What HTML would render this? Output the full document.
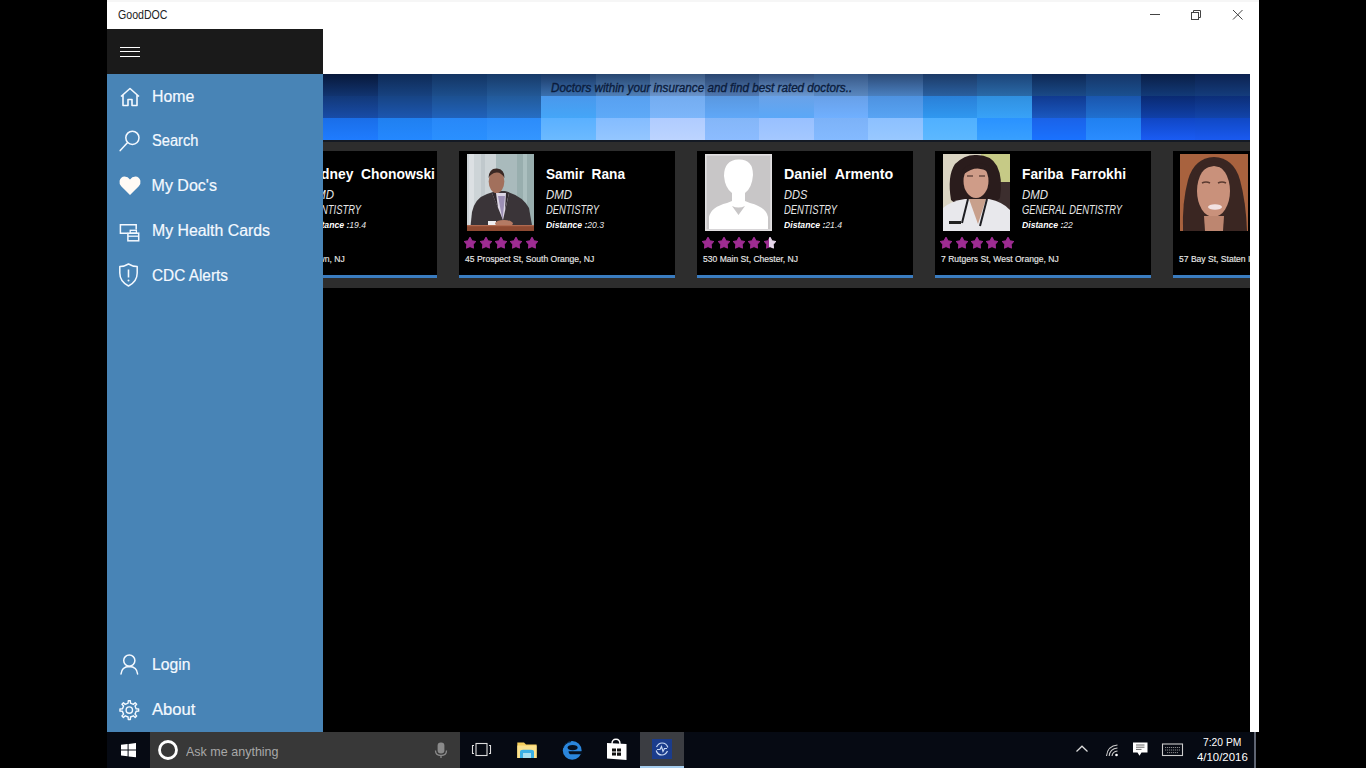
<!DOCTYPE html>
<html><head><meta charset="utf-8">
<style>
*{margin:0;padding:0;box-sizing:border-box}
html,body{width:1366px;height:768px;overflow:hidden;background:#000;font-family:"Liberation Sans",sans-serif}
.abs{position:absolute}
#win{position:absolute;left:107px;top:0;width:1152px;height:732px;background:#000}
#titlebar{position:absolute;left:107px;top:0;width:1152px;height:29px;background:#fff}
#titlebar .tl{position:absolute;left:0;top:0;width:1152px;height:2px;background:#f6f6f6}
#apptitle{transform-origin:0 0;transform:scaleX(0.884);position:absolute;left:118px;top:8.6px;font-size:12px;line-height:12px;color:#222;white-space:nowrap}
#cmdbar{position:absolute;left:323px;top:29px;width:936px;height:45px;background:#fff}
#rframe{position:absolute;left:1250px;top:29px;width:9px;height:703px;background:#fff}
#banner{position:absolute;left:323px;top:74px;width:927px;height:66px;overflow:hidden}
.tile{position:absolute}
#bannertext{-webkit-text-stroke:0.35px #0b1c3c;transform-origin:0 0;transform:scaleX(0.973);position:absolute;left:551px;top:81.9px;font-size:12px;line-height:12px;font-style:italic;color:#0b1c3c;white-space:nowrap}
#strip{position:absolute;left:323px;top:140px;width:927px;height:148px;background:#2d2d2d;overflow:hidden}
#strip .topl{position:absolute;left:0;top:0;width:927px;height:1.5px;background:#141a24}
#cardsclip{position:absolute;left:0;top:0;width:1250px;height:288px;overflow:hidden}
.card{position:absolute;top:151px;width:216px;height:126px;background:#000;color:#fff}
.card .photo{position:absolute;left:8px;top:3px;width:67px;height:77px}
.card .photo svg{display:block}
.card .name{transform-origin:0 0;position:absolute;left:86.5px;top:15.3px;font-size:15px;line-height:15px;font-weight:bold;white-space:nowrap;color:#fff}
.card .deg{transform-origin:0 0;position:absolute;left:86.5px;top:38.4px;font-size:12px;line-height:12px;font-style:italic;white-space:nowrap;color:#e6e6e6}
.card .spec{transform-origin:0 0;position:absolute;left:86.5px;top:52.5px;font-size:12px;line-height:12px;font-style:italic;white-space:nowrap;color:#e6e6e6}
.card .dist{transform-origin:0 0;transform:scaleX(0.96);position:absolute;left:86.5px;top:70.1px;font-size:9px;line-height:9px;font-style:italic;white-space:nowrap;color:#e6e6e6}
.card .dist b{color:#fff}
.card .stars{position:absolute;left:5.4px;top:86px;height:11px;width:90px}
.star{position:absolute;top:0}
.star svg{display:block}
.card .addr{-webkit-text-stroke:0.15px #e8e8e8;transform-origin:0 0;transform:scaleX(0.9);position:absolute;left:5.6px;top:102.5px;font-size:9.5px;line-height:9.5px;white-space:nowrap;color:#e8e8e8}
.card .bline{position:absolute;left:0;top:123.5px;width:216px;height:3.3px;background:#3a7cc0}
#pane{position:absolute;left:107px;top:29px;width:216px;height:703px;background:#4884b6}
#panehead{position:absolute;left:107px;top:29px;width:216px;height:45px;background:#1a1a1a}
.hb{position:absolute;left:120px;width:20px;height:1.4px;background:#fff}
.nav{-webkit-text-stroke:0.2px #f4f9ff;transform-origin:0 0;position:absolute;left:151.6px;font-size:16px;line-height:16px;color:#f4f9ff;white-space:nowrap}
.ico{position:absolute}
#taskbar{position:absolute;left:107px;top:732px;width:1149px;height:36px;background:#060a13}
#search{position:absolute;left:150px;top:732px;width:310px;height:36px;background:#383838}
#ask{transform-origin:0 0;transform:scaleX(0.963);position:absolute;left:186px;top:744.6px;font-size:13px;line-height:13px;color:#a8a8a8;white-space:nowrap}
#active{position:absolute;left:640px;top:732px;width:44px;height:36px;background:#3b3d42}
#activebar{position:absolute;left:640px;top:766px;width:44px;height:2px;background:#a6cdee}
.clock{transform-origin:0 0;position:absolute;font-size:11px;line-height:11px;color:#fff;white-space:nowrap}
#showdesk{position:absolute;left:1254px;top:732px;width:2px;height:36px;background:#5e6472}
</style></head><body>
<div id="win"></div>
<div id="titlebar"><div class="tl"></div></div>
<div id="apptitle">GoodDOC</div>
<!-- window controls -->
<svg class="abs" style="left:1140px;top:4px" width="110" height="22" viewBox="0 0 110 22">
 <line x1="10" y1="10.5" x2="20" y2="10.5" stroke="#444" stroke-width="1"/>
 <rect x="51.5" y="8.5" width="7" height="7" fill="none" stroke="#444" stroke-width="1"/>
 <path d="M53.5 8.5 V6.5 H60.5 V13.5 H58.5" fill="none" stroke="#444" stroke-width="1"/>
 <path d="M93 6 L102.5 15.5 M102.5 6 L93 15.5" stroke="#444" stroke-width="1"/>
</svg>
<div id="cmdbar"></div>
<div id="rframe"></div>
<div id="banner"></div>
<div class="tile" style="left:323.00px;top:74px;width:55.03px;height:22px;background:linear-gradient(#08183a,#113470)"></div>
<div class="tile" style="left:323.00px;top:96px;width:55.03px;height:22px;background:linear-gradient(#123878,#184ca8)"></div>
<div class="tile" style="left:323.00px;top:118px;width:55.03px;height:22px;background:linear-gradient(#1a6ee8,#1f7cff)"></div>
<div class="tile" style="left:377.53px;top:74px;width:55.03px;height:22px;background:linear-gradient(#0e2a56,#174280)"></div>
<div class="tile" style="left:377.53px;top:96px;width:55.03px;height:22px;background:linear-gradient(#174484,#1c56b0)"></div>
<div class="tile" style="left:377.53px;top:118px;width:55.03px;height:22px;background:linear-gradient(#2080f0,#2488ff)"></div>
<div class="tile" style="left:432.06px;top:74px;width:55.03px;height:22px;background:linear-gradient(#133462,#1c4e8c)"></div>
<div class="tile" style="left:432.06px;top:96px;width:55.03px;height:22px;background:linear-gradient(#1c5090,#2062bc)"></div>
<div class="tile" style="left:432.06px;top:118px;width:55.03px;height:22px;background:linear-gradient(#2888f8,#2a90ff)"></div>
<div class="tile" style="left:486.59px;top:74px;width:55.03px;height:22px;background:linear-gradient(#173a68,#225896)"></div>
<div class="tile" style="left:486.59px;top:96px;width:55.03px;height:22px;background:linear-gradient(#225a9a,#266ec4)"></div>
<div class="tile" style="left:486.59px;top:118px;width:55.03px;height:22px;background:linear-gradient(#2c8cfa,#3496ff)"></div>
<div class="tile" style="left:541.12px;top:74px;width:55.03px;height:22px;background:linear-gradient(#1c3a66,#3a70b0)"></div>
<div class="tile" style="left:541.12px;top:96px;width:55.03px;height:22px;background:linear-gradient(#4a98ec,#44a6f8)"></div>
<div class="tile" style="left:541.12px;top:118px;width:55.03px;height:22px;background:linear-gradient(#5ab0ff,#6cbaff)"></div>
<div class="tile" style="left:595.65px;top:74px;width:55.03px;height:22px;background:linear-gradient(#274670,#5080b8)"></div>
<div class="tile" style="left:595.65px;top:96px;width:55.03px;height:22px;background:linear-gradient(#58a0f0,#5eaaf8)"></div>
<div class="tile" style="left:595.65px;top:118px;width:55.03px;height:22px;background:linear-gradient(#84bcff,#94c6ff)"></div>
<div class="tile" style="left:650.18px;top:74px;width:55.03px;height:22px;background:linear-gradient(#3c5a82,#6a94cc)"></div>
<div class="tile" style="left:650.18px;top:96px;width:55.03px;height:22px;background:linear-gradient(#74acf0,#7cb6fa)"></div>
<div class="tile" style="left:650.18px;top:118px;width:55.03px;height:22px;background:linear-gradient(#b0ccff,#bcd4ff)"></div>
<div class="tile" style="left:704.71px;top:74px;width:55.03px;height:22px;background:linear-gradient(#2a4670,#5078b0)"></div>
<div class="tile" style="left:704.71px;top:96px;width:55.03px;height:22px;background:linear-gradient(#5a98e0,#60a8f8)"></div>
<div class="tile" style="left:704.71px;top:118px;width:55.03px;height:22px;background:linear-gradient(#84b6f8,#8cbcff)"></div>
<div class="tile" style="left:759.24px;top:74px;width:55.03px;height:22px;background:linear-gradient(#334f7c,#6a98d0)"></div>
<div class="tile" style="left:759.24px;top:96px;width:55.03px;height:22px;background:linear-gradient(#6aa2e8,#5aa8f8)"></div>
<div class="tile" style="left:759.24px;top:118px;width:55.03px;height:22px;background:linear-gradient(#98c0ff,#a4c8ff)"></div>
<div class="tile" style="left:813.76px;top:74px;width:55.03px;height:22px;background:linear-gradient(#385886,#5a88c0)"></div>
<div class="tile" style="left:813.76px;top:96px;width:55.03px;height:22px;background:linear-gradient(#68a0e8,#70b0ff)"></div>
<div class="tile" style="left:813.76px;top:118px;width:55.03px;height:22px;background:linear-gradient(#7cb2f8,#84baff)"></div>
<div class="tile" style="left:868.29px;top:74px;width:55.03px;height:22px;background:linear-gradient(#2c4a76,#4a80c0)"></div>
<div class="tile" style="left:868.29px;top:96px;width:55.03px;height:22px;background:linear-gradient(#4e92e0,#58a4f4)"></div>
<div class="tile" style="left:868.29px;top:118px;width:55.03px;height:22px;background:linear-gradient(#8cc0ff,#98c8ff)"></div>
<div class="tile" style="left:922.82px;top:74px;width:55.03px;height:22px;background:linear-gradient(#1c3a66,#2a60a0)"></div>
<div class="tile" style="left:922.82px;top:96px;width:55.03px;height:22px;background:linear-gradient(#2a80d8,#3098f0)"></div>
<div class="tile" style="left:922.82px;top:118px;width:55.03px;height:22px;background:linear-gradient(#50b0ff,#5cb8ff)"></div>
<div class="tile" style="left:977.35px;top:74px;width:55.03px;height:22px;background:linear-gradient(#1c4478,#2a6aa8)"></div>
<div class="tile" style="left:977.35px;top:96px;width:55.03px;height:22px;background:linear-gradient(#3090e0,#38a2f8)"></div>
<div class="tile" style="left:977.35px;top:118px;width:55.03px;height:22px;background:linear-gradient(#2a92ff,#38a0ff)"></div>
<div class="tile" style="left:1031.88px;top:74px;width:55.03px;height:22px;background:linear-gradient(#0e2854,#1a4a88)"></div>
<div class="tile" style="left:1031.88px;top:96px;width:55.03px;height:22px;background:linear-gradient(#103a90,#1a58c0)"></div>
<div class="tile" style="left:1031.88px;top:118px;width:55.03px;height:22px;background:linear-gradient(#1a62e8,#1a72ff)"></div>
<div class="tile" style="left:1086.41px;top:74px;width:55.03px;height:22px;background:linear-gradient(#163668,#1a5090)"></div>
<div class="tile" style="left:1086.41px;top:96px;width:55.03px;height:22px;background:linear-gradient(#1a56ae,#2070d0)"></div>
<div class="tile" style="left:1086.41px;top:118px;width:55.03px;height:22px;background:linear-gradient(#2080f0,#2a8cff)"></div>
<div class="tile" style="left:1140.94px;top:74px;width:55.03px;height:22px;background:linear-gradient(#0a1e46,#123a78)"></div>
<div class="tile" style="left:1140.94px;top:96px;width:55.03px;height:22px;background:linear-gradient(#0a2a72,#1040a8)"></div>
<div class="tile" style="left:1140.94px;top:118px;width:55.03px;height:22px;background:linear-gradient(#1046c4,#1a5cf4)"></div>
<div class="tile" style="left:1195.47px;top:74px;width:55.03px;height:22px;background:linear-gradient(#0c2250,#143c7c)"></div>
<div class="tile" style="left:1195.47px;top:96px;width:55.03px;height:22px;background:linear-gradient(#0c2e78,#1244aa)"></div>
<div class="tile" style="left:1195.47px;top:118px;width:55.03px;height:22px;background:linear-gradient(#1048c4,#1a5af0)"></div>
<div id="bannertext">Doctors within your insurance and find best rated doctors..</div>
<div id="strip"><div class="topl"></div></div>
<div id="cardsclip">
<div class="card" style="left:221px">
<div class="photo" style="left:8px"></div>
<div class="name" style="transform:scaleX(0.923)">Sidney&nbsp;&nbsp;Chonowski</div>
<div class="deg" style="transform:scaleX(0.952)">DMD</div>
<div class="spec" style="transform:scaleX(0.784)">DENTISTRY</div>
<div class="dist"><b>Distance :</b>19.4</div>
<div class="stars"><div class="star" style="left:0.0px"><svg width="12" height="12" viewBox="0 0 12 12"><path d="M6.00 0.40 L7.91 3.67 L11.61 4.48 L9.09 7.30 L9.47 11.07 L6.00 9.55 L2.53 11.07 L2.91 7.30 L0.39 4.48 L4.09 3.67 Z" fill="#9e2c92" stroke="#9e2c92" stroke-width="1.1" stroke-linejoin="round"/></svg></div><div class="star" style="left:15.3px"><svg width="12" height="12" viewBox="0 0 12 12"><path d="M6.00 0.40 L7.91 3.67 L11.61 4.48 L9.09 7.30 L9.47 11.07 L6.00 9.55 L2.53 11.07 L2.91 7.30 L0.39 4.48 L4.09 3.67 Z" fill="#9e2c92" stroke="#9e2c92" stroke-width="1.1" stroke-linejoin="round"/></svg></div><div class="star" style="left:30.6px"><svg width="12" height="12" viewBox="0 0 12 12"><path d="M6.00 0.40 L7.91 3.67 L11.61 4.48 L9.09 7.30 L9.47 11.07 L6.00 9.55 L2.53 11.07 L2.91 7.30 L0.39 4.48 L4.09 3.67 Z" fill="#9e2c92" stroke="#9e2c92" stroke-width="1.1" stroke-linejoin="round"/></svg></div><div class="star" style="left:45.9px"><svg width="12" height="12" viewBox="0 0 12 12"><path d="M6.00 0.40 L7.91 3.67 L11.61 4.48 L9.09 7.30 L9.47 11.07 L6.00 9.55 L2.53 11.07 L2.91 7.30 L0.39 4.48 L4.09 3.67 Z" fill="#9e2c92" stroke="#9e2c92" stroke-width="1.1" stroke-linejoin="round"/></svg></div><div class="star" style="left:61.2px"><svg width="12" height="12" viewBox="0 0 12 12"><path d="M6.00 0.40 L7.91 3.67 L11.61 4.48 L9.09 7.30 L9.47 11.07 L6.00 9.55 L2.53 11.07 L2.91 7.30 L0.39 4.48 L4.09 3.67 Z" fill="#9e2c92" stroke="#9e2c92" stroke-width="1.1" stroke-linejoin="round"/></svg></div></div>
<div class="addr">Speedwell Ave, Morristown, NJ</div>
<div class="bline"></div>
</div>
<div class="card" style="left:459px">
<div class="photo" style="left:8px"><svg width="67" height="77" viewBox="0 0 67 77">
<rect width="67" height="77" fill="#a9babc"/>
<rect x="0" y="0" width="29" height="77" fill="#cdd4d7"/>
<rect x="2" y="0" width="5" height="77" fill="#e2e6e8" opacity="0.7"/>
<rect x="14" y="0" width="4" height="77" fill="#b8c0c4" opacity="0.6"/>
<rect x="50" y="0" width="17" height="77" fill="#98aeae"/>
<rect x="56" y="0" width="4" height="77" fill="#b4c6c6" opacity="0.7"/>
<path d="M3 77 L5 58 Q8 44 20 40 L29 37 L38 37 Q56 42 62 54 L66 77 Z" fill="#3a3438"/>
<path d="M25 39 L36 66 L42 39 Z" fill="#dcd6e4"/>
<path d="M31 42 L35.5 66 L38 42 Z" fill="#9d90b6"/>
<path d="M25 39 L31 54 L29 39 Z M42 39 L38 56 L39 39 Z" fill="#2e282c"/>
<ellipse cx="29.5" cy="27.5" rx="7.8" ry="11.5" fill="#a2705c"/>
<path d="M21.5 24 Q22 14 30 14.5 Q37.5 15 37.5 24 Q34 18 29.5 18.5 Q24 19 21.5 24 Z" fill="#3a2824"/>
<rect x="21" y="67" width="8" height="6" fill="#eeeef2"/>
<ellipse cx="37" cy="69.5" rx="9" ry="3.5" fill="#b47a64"/>
<rect x="0" y="71" width="67" height="6" fill="#8e4a32"/>
<rect x="0" y="71" width="67" height="1.2" fill="#b06a50"/>
</svg></div>
<div class="name" style="transform:scaleX(0.911)">Samir&nbsp;&nbsp;Rana</div>
<div class="deg" style="transform:scaleX(0.952)">DMD</div>
<div class="spec" style="transform:scaleX(0.784)">DENTISTRY</div>
<div class="dist"><b>Distance :</b>20.3</div>
<div class="stars"><div class="star" style="left:0.0px"><svg width="12" height="12" viewBox="0 0 12 12"><path d="M6.00 0.40 L7.91 3.67 L11.61 4.48 L9.09 7.30 L9.47 11.07 L6.00 9.55 L2.53 11.07 L2.91 7.30 L0.39 4.48 L4.09 3.67 Z" fill="#9e2c92" stroke="#9e2c92" stroke-width="1.1" stroke-linejoin="round"/></svg></div><div class="star" style="left:15.3px"><svg width="12" height="12" viewBox="0 0 12 12"><path d="M6.00 0.40 L7.91 3.67 L11.61 4.48 L9.09 7.30 L9.47 11.07 L6.00 9.55 L2.53 11.07 L2.91 7.30 L0.39 4.48 L4.09 3.67 Z" fill="#9e2c92" stroke="#9e2c92" stroke-width="1.1" stroke-linejoin="round"/></svg></div><div class="star" style="left:30.6px"><svg width="12" height="12" viewBox="0 0 12 12"><path d="M6.00 0.40 L7.91 3.67 L11.61 4.48 L9.09 7.30 L9.47 11.07 L6.00 9.55 L2.53 11.07 L2.91 7.30 L0.39 4.48 L4.09 3.67 Z" fill="#9e2c92" stroke="#9e2c92" stroke-width="1.1" stroke-linejoin="round"/></svg></div><div class="star" style="left:45.9px"><svg width="12" height="12" viewBox="0 0 12 12"><path d="M6.00 0.40 L7.91 3.67 L11.61 4.48 L9.09 7.30 L9.47 11.07 L6.00 9.55 L2.53 11.07 L2.91 7.30 L0.39 4.48 L4.09 3.67 Z" fill="#9e2c92" stroke="#9e2c92" stroke-width="1.1" stroke-linejoin="round"/></svg></div><div class="star" style="left:61.2px"><svg width="12" height="12" viewBox="0 0 12 12"><path d="M6.00 0.40 L7.91 3.67 L11.61 4.48 L9.09 7.30 L9.47 11.07 L6.00 9.55 L2.53 11.07 L2.91 7.30 L0.39 4.48 L4.09 3.67 Z" fill="#9e2c92" stroke="#9e2c92" stroke-width="1.1" stroke-linejoin="round"/></svg></div></div>
<div class="addr">45 Prospect St, South Orange, NJ</div>
<div class="bline"></div>
</div>
<div class="card" style="left:697px">
<div class="photo" style="left:8px"><svg width="67" height="77" viewBox="0 0 67 77">
<rect width="67" height="77" fill="#e2e0e1"/>
<rect x="1.6" y="1.6" width="63.8" height="73.8" fill="#c8c6c7"/>
<path d="M4 75 V63 Q6 53 22 49 L27 47 V39 Q20 34 19 22 Q19 6 33.5 5.5 Q48 5 48 21 Q47 34 40 39 V47 L45 49 Q61 53 63 63 V75 Z" fill="#ffffff"/>
<path d="M27 52 L33.5 61 L40 52 Q33.5 55 27 52 Z" fill="#c8c6c7"/>
</svg></div>
<div class="name" style="transform:scaleX(0.95)">Daniel&nbsp;&nbsp;Armento</div>
<div class="deg" style="transform:scaleX(0.921)">DDS</div>
<div class="spec" style="transform:scaleX(0.784)">DENTISTRY</div>
<div class="dist"><b>Distance :</b>21.4</div>
<div class="stars"><div class="star" style="left:0.0px"><svg width="12" height="12" viewBox="0 0 12 12"><path d="M6.00 0.40 L7.91 3.67 L11.61 4.48 L9.09 7.30 L9.47 11.07 L6.00 9.55 L2.53 11.07 L2.91 7.30 L0.39 4.48 L4.09 3.67 Z" fill="#9e2c92" stroke="#9e2c92" stroke-width="1.1" stroke-linejoin="round"/></svg></div><div class="star" style="left:15.3px"><svg width="12" height="12" viewBox="0 0 12 12"><path d="M6.00 0.40 L7.91 3.67 L11.61 4.48 L9.09 7.30 L9.47 11.07 L6.00 9.55 L2.53 11.07 L2.91 7.30 L0.39 4.48 L4.09 3.67 Z" fill="#9e2c92" stroke="#9e2c92" stroke-width="1.1" stroke-linejoin="round"/></svg></div><div class="star" style="left:30.6px"><svg width="12" height="12" viewBox="0 0 12 12"><path d="M6.00 0.40 L7.91 3.67 L11.61 4.48 L9.09 7.30 L9.47 11.07 L6.00 9.55 L2.53 11.07 L2.91 7.30 L0.39 4.48 L4.09 3.67 Z" fill="#9e2c92" stroke="#9e2c92" stroke-width="1.1" stroke-linejoin="round"/></svg></div><div class="star" style="left:45.9px"><svg width="12" height="12" viewBox="0 0 12 12"><path d="M6.00 0.40 L7.91 3.67 L11.61 4.48 L9.09 7.30 L9.47 11.07 L6.00 9.55 L2.53 11.07 L2.91 7.30 L0.39 4.48 L4.09 3.67 Z" fill="#9e2c92" stroke="#9e2c92" stroke-width="1.1" stroke-linejoin="round"/></svg></div><div class="star" style="left:61.2px"><svg width="12" height="12" viewBox="0 0 12 12"><defs><linearGradient id="hg"><stop offset="45%" stop-color="#9e2c92"/><stop offset="45%" stop-color="#e6d6ea"/></linearGradient></defs><path d="M6.00 0.40 L7.91 3.67 L11.61 4.48 L9.09 7.30 L9.47 11.07 L6.00 9.55 L2.53 11.07 L2.91 7.30 L0.39 4.48 L4.09 3.67 Z" fill="url(#hg)" stroke="url(#hg)" stroke-width="1.1" stroke-linejoin="round"/></svg></div></div>
<div class="addr">530 Main St, Chester, NJ</div>
<div class="bline"></div>
</div>
<div class="card" style="left:935px">
<div class="photo" style="left:8px"><svg width="67" height="77" viewBox="0 0 67 77">
<rect width="67" height="77" fill="#dad4c2"/>
<rect x="38" y="0" width="29" height="30" fill="#c6ca86"/>
<rect x="46" y="28" width="21" height="28" fill="#3c2e2e"/>
<path d="M8 46 Q4 22 12 10 Q22 0 34 1 Q48 1 54 12 Q60 24 57 44 Q52 50 44 48 L24 48 Q14 52 8 46 Z" fill="#2a1c1c"/>
<ellipse cx="33" cy="27" rx="12.5" ry="17" fill="#cf9c88"/>
<path d="M19 16 Q30 5 46 12 L46 18 Q33 10 21 20 Z" fill="#2a1c1c"/>
<path d="M24 22 H30 M36 22 H42" stroke="#6a4a40" stroke-width="1.4"/>
<path d="M0 77 L0 54 Q8 47 22 45 L46 45 Q60 48 67 56 L67 77 Z" fill="#e8e8ec"/>
<path d="M26 45 L35 70 L43 45 Z" fill="#c8a08c"/>
<path d="M25 45 L19 69 M44 45 L37 72" stroke="#1e1e22" stroke-width="2" fill="none"/>
<rect x="6" y="67" width="12" height="3" fill="#222"/>
</svg></div>
<div class="name" style="transform:scaleX(0.917)">Fariba&nbsp;&nbsp;Farrokhi</div>
<div class="deg" style="transform:scaleX(0.952)">DMD</div>
<div class="spec" style="transform:scaleX(0.781)">GENERAL DENTISTRY</div>
<div class="dist"><b>Distance :</b>22</div>
<div class="stars"><div class="star" style="left:0.0px"><svg width="12" height="12" viewBox="0 0 12 12"><path d="M6.00 0.40 L7.91 3.67 L11.61 4.48 L9.09 7.30 L9.47 11.07 L6.00 9.55 L2.53 11.07 L2.91 7.30 L0.39 4.48 L4.09 3.67 Z" fill="#9e2c92" stroke="#9e2c92" stroke-width="1.1" stroke-linejoin="round"/></svg></div><div class="star" style="left:15.3px"><svg width="12" height="12" viewBox="0 0 12 12"><path d="M6.00 0.40 L7.91 3.67 L11.61 4.48 L9.09 7.30 L9.47 11.07 L6.00 9.55 L2.53 11.07 L2.91 7.30 L0.39 4.48 L4.09 3.67 Z" fill="#9e2c92" stroke="#9e2c92" stroke-width="1.1" stroke-linejoin="round"/></svg></div><div class="star" style="left:30.6px"><svg width="12" height="12" viewBox="0 0 12 12"><path d="M6.00 0.40 L7.91 3.67 L11.61 4.48 L9.09 7.30 L9.47 11.07 L6.00 9.55 L2.53 11.07 L2.91 7.30 L0.39 4.48 L4.09 3.67 Z" fill="#9e2c92" stroke="#9e2c92" stroke-width="1.1" stroke-linejoin="round"/></svg></div><div class="star" style="left:45.9px"><svg width="12" height="12" viewBox="0 0 12 12"><path d="M6.00 0.40 L7.91 3.67 L11.61 4.48 L9.09 7.30 L9.47 11.07 L6.00 9.55 L2.53 11.07 L2.91 7.30 L0.39 4.48 L4.09 3.67 Z" fill="#9e2c92" stroke="#9e2c92" stroke-width="1.1" stroke-linejoin="round"/></svg></div><div class="star" style="left:61.2px"><svg width="12" height="12" viewBox="0 0 12 12"><path d="M6.00 0.40 L7.91 3.67 L11.61 4.48 L9.09 7.30 L9.47 11.07 L6.00 9.55 L2.53 11.07 L2.91 7.30 L0.39 4.48 L4.09 3.67 Z" fill="#9e2c92" stroke="#9e2c92" stroke-width="1.1" stroke-linejoin="round"/></svg></div></div>
<div class="addr">7 Rutgers St, West Orange, NJ</div>
<div class="bline"></div>
</div>
<div class="card" style="left:1173px">
<div class="photo" style="left:6.5px"><svg width="68" height="77" viewBox="0 0 68 77">
<rect width="68" height="77" fill="#a8623e"/>
<path d="M3 77 Q2 48 8 26 Q14 4 34 3 Q54 4 60 26 Q66 48 67 77 Z" fill="#3a2622"/>
<ellipse cx="33.5" cy="37" rx="16.5" ry="26" fill="#c9917b"/>
<path d="M15 26 Q18 8 34 7 Q50 8 53 24 Q46 13 34 12 Q22 13 15 26 Z" fill="#3a2622"/>
<path d="M22 29 Q26 27 30 29 M38 29 Q42 27 46 29" stroke="#5a3a30" stroke-width="1.5" fill="none"/>
<ellipse cx="35" cy="53" rx="7" ry="2.8" fill="#f2e2e2"/>
<path d="M24 62 L25 77 L43 77 L44 62 Z" fill="#bd8670"/>
</svg></div>
<div class="name" style="transform:scaleX(0.92)">Jennifer&nbsp;&nbsp;Kahan</div>
<div class="deg" style="transform:scaleX(0.921)">DDS</div>
<div class="spec" style="transform:scaleX(0.784)">DENTISTRY</div>
<div class="dist"><b>Distance :</b>23.1</div>
<div class="stars"></div>
<div class="addr">57 Bay St, Staten Island, NY</div>
<div class="bline"></div>
</div>

</div>
<!-- nav pane -->
<div id="pane"></div>
<div id="panehead"></div>
<div class="hb" style="top:46.5px"></div>
<div class="hb" style="top:51px"></div>
<div class="hb" style="top:55.6px"></div>

<!-- home icon -->
<svg class="ico" style="left:118px;top:86px" width="24" height="22" viewBox="0 0 24 22">
 <path d="M3 10.5 L12 2.5 L21 10.5 M5 9 V19.5 H10 V13.5 H14 V19.5 H19 V9" fill="none" stroke="#f4f9ff" stroke-width="1.6" stroke-linejoin="round"/>
</svg>
<div class="nav" style="top:88.7px;transform:scaleX(0.99)">Home</div>

<!-- search icon -->
<svg class="ico" style="left:118px;top:129px" width="24" height="24" viewBox="0 0 24 24">
 <circle cx="14.4" cy="8.8" r="6.6" fill="none" stroke="#f4f9ff" stroke-width="1.5"/>
 <path d="M9.6 13.6 L2.2 21.6" stroke="#f4f9ff" stroke-width="1.5" stroke-linecap="round"/>
</svg>
<div class="nav" style="top:133.4px;transform:scaleX(0.915)">Search</div>

<!-- heart -->
<svg class="ico" style="left:119px;top:176px" width="22" height="20" viewBox="0 0 22 20">
 <path d="M11 19 L2.2 10.2 Q0 7.8 0.6 4.8 Q1.6 0.8 5.6 0.6 Q9 0.6 11 3.6 Q13 0.6 16.4 0.6 Q20.4 0.8 21.4 4.8 Q22 7.8 19.8 10.2 Z" fill="#fffaf5"/>
</svg>
<div class="nav" style="top:178.4px;transform:scaleX(1.0)">My Doc's</div>

<!-- health cards -->
<svg class="ico" style="left:118px;top:222px" width="24" height="22" viewBox="0 0 24 22">
 <path d="M9.5 11.3 H2.4 V2.7 H18.2 V7.6" fill="none" stroke="#f4f9ff" stroke-width="1.5"/>
 <rect x="9.9" y="11.2" width="10.8" height="7.6" fill="none" stroke="#f4f9ff" stroke-width="1.5"/>
 <rect x="12.2" y="8.3" width="6.2" height="2.9" fill="none" stroke="#f4f9ff" stroke-width="1.3"/>
 <path d="M9.9 14.2 H20.7" fill="none" stroke="#f4f9ff" stroke-width="1.3"/>
</svg>
<div class="nav" style="top:223.4px;transform:scaleX(0.99)">My Health Cards</div>

<!-- shield -->
<svg class="ico" style="left:118px;top:262px" width="22" height="26" viewBox="0 0 22 26">
 <path d="M10.5 2 Q6 4.6 1.8 4.6 V11 Q1.8 19.5 10.5 24 Q19.2 19.5 19.2 11 V4.6 Q15 4.6 10.5 2 Z" fill="none" stroke="#f4f9ff" stroke-width="1.5" stroke-linejoin="round"/>
 <path d="M10.5 7.5 V15.5" stroke="#f4f9ff" stroke-width="1.6"/>
 <circle cx="10.5" cy="18.5" r="1" fill="#f4f9ff"/>
</svg>
<div class="nav" style="top:268.4px;transform:scaleX(0.96)">CDC Alerts</div>

<!-- login -->
<svg class="ico" style="left:118px;top:652px" width="24" height="24" viewBox="0 0 24 24">
 <circle cx="11.3" cy="8.6" r="5.6" fill="none" stroke="#f4f9ff" stroke-width="1.5"/>
 <path d="M3 22 Q3.6 14.6 11.3 14.4 Q19 14.6 19.6 22" fill="none" stroke="#f4f9ff" stroke-width="1.5" stroke-linecap="round"/>
</svg>
<div class="nav" style="top:657.3px;transform:scaleX(0.98)">Login</div>

<!-- gear -->
<svg class="ico" style="left:117px;top:697.5px" width="24" height="24" viewBox="0 0 24 24">
 <g fill="none" stroke="#f4f9ff" stroke-width="1.4" stroke-linejoin="round">
 <path d="M19.20 10.90 L21.64 11.07 L21.64 13.13 L19.20 13.30 L18.03 16.13 L19.64 17.98 L18.18 19.44 L16.33 17.83 L13.50 19.00 L13.33 21.44 L11.27 21.44 L11.10 19.00 L8.27 17.83 L6.42 19.44 L4.96 17.98 L6.57 16.13 L5.40 13.30 L2.96 13.13 L2.96 11.07 L5.40 10.90 L6.57 8.07 L4.96 6.22 L6.42 4.76 L8.27 6.37 L11.10 5.20 L11.27 2.76 L13.33 2.76 L13.50 5.20 L16.33 6.37 L18.18 4.76 L19.64 6.22 L18.03 8.07 Z"/>
 <circle cx="12.3" cy="12.1" r="3.2"/>
 </g>
</svg>
<div class="nav" style="top:701.6px;transform:scaleX(1.035)">About</div>

<!-- taskbar -->
<div id="taskbar"></div>
<svg class="abs" style="left:121px;top:743px" width="16" height="15" viewBox="0 0 16 15">
 <path d="M0 1.8 L6.6 1 V6.6 H0 Z M7.6 0.9 L15 0 V6.6 H7.6 Z M0 7.6 H6.6 V13.3 L0 12.6 Z M7.6 7.6 H15 V14.2 L7.6 13.4 Z" fill="#fff"/>
</svg>
<div id="search"></div>
<svg class="abs" style="left:157px;top:739px" width="22" height="22" viewBox="0 0 22 22">
 <circle cx="11" cy="11" r="8.5" fill="none" stroke="#fff" stroke-width="2.8"/>
</svg>
<div id="ask">Ask me anything</div>
<svg class="abs" style="left:433px;top:741px" width="16" height="18" viewBox="0 0 16 18">
 <rect x="4.6" y="1.5" width="6.8" height="11" rx="3.2" fill="#8a8a8a"/>
 <path d="M2.5 9.5 Q2.5 14.5 8 14.5 Q13.5 14.5 13.5 9.5 M8 14.5 V17" fill="none" stroke="#8a8a8a" stroke-width="1.3"/>
</svg>
<!-- task view -->
<svg class="abs" style="left:471px;top:742px" width="21" height="15" viewBox="0 0 21 15">
 <rect x="5" y="1.5" width="11" height="12" fill="none" stroke="#ddd" stroke-width="1.1"/>
 <path d="M3 3.5 H1.5 V11.5 H3 M18 3.5 H19.5 V11.5 H18" fill="none" stroke="#ddd" stroke-width="1.1"/>
</svg>
<!-- folder -->
<svg class="abs" style="left:517px;top:741.5px" width="21" height="17" viewBox="0 0 21 17">
 <path d="M0.3 0.5 H7 L9 2.5 H19.6 V16 H0.3 Z" fill="#f6cf5c"/>
 <rect x="0.3" y="3.5" width="19.3" height="12.5" fill="#fbe28e"/>
 <path d="M3 16 V10 Q3 7.8 6 7.8 H14 Q17 7.8 17 10 V16 Z" fill="#3ab0e6"/>
 <rect x="6" y="11" width="8" height="5" fill="#a8e0f0"/>
</svg>
<!-- edge -->
<svg class="abs" style="left:562px;top:739.5px" width="21" height="21" viewBox="0 0 21 21">
 <circle cx="10.2" cy="10.4" r="9.4" fill="#2a86dc"/>
 <ellipse cx="10.6" cy="7.6" rx="5" ry="2.6" fill="#06101e"/>
 <path d="M6.5 11.2 H20.5 V14.2 H8 Q6.5 13 6.5 11.2 Z" fill="#06101e"/>
 <path d="M1 8 Q3 2.5 9 1.6" fill="none" stroke="#06101e" stroke-width="0.9"/>
</svg>
<!-- store -->
<svg class="abs" style="left:606px;top:738px" width="22" height="23" viewBox="0 0 22 23">
 <path d="M6 6 Q6 1.2 10 1.2 Q14 1.2 14 6" fill="none" stroke="#fff" stroke-width="1.4"/>
 <path d="M1 5 L20.5 6 V22 L1 20.5 Z" fill="#fff"/>
 <path d="M6 10.5 H10 V13.6 H6 Z M11 10.5 H15 V13.6 H11 Z M6 14.6 H10 V17.6 H6 Z M11 14.6 H15 V17.8 H11 Z" fill="#111"/>
</svg>
<!-- active app -->
<div id="active"></div>
<div id="activebar"></div>
<svg class="abs" style="left:652px;top:739px" width="20" height="20" viewBox="0 0 20 20">
 <rect width="20" height="20" fill="#1b3c8c"/>
 <path d="M4.5 8 Q6.5 4 10 4 Q14.5 4 15.8 8.5 M15.5 12 Q13.5 16 10 16 Q5.5 16 4.2 11.5" fill="none" stroke="#c8d8f4" stroke-width="1.2"/>
 <path d="M5 10.5 H8 L9.5 7.5 L11 12.5 L12.5 9.5 H15" fill="none" stroke="#c8d8f4" stroke-width="1.2"/>
</svg>
<!-- tray -->
<svg class="abs" style="left:1075px;top:744px" width="14" height="10" viewBox="0 0 14 10">
 <path d="M1.5 7.5 L7 2.2 L12.5 7.5" fill="none" stroke="#ddd" stroke-width="1.2"/>
</svg>
<svg class="abs" style="left:1105px;top:743px" width="15" height="15" viewBox="0 0 15 15">
 <g fill="none" stroke="#ccc" stroke-width="1.1">
 <path d="M1.5 13 Q2.5 3 12.5 2"/>
 <path d="M4.2 13 Q4.8 5.8 12.5 5"/>
 <path d="M7 13 Q7.5 8.5 12.5 8"/>
 </g>
 <circle cx="11.5" cy="12" r="1.3" fill="#fff"/>
</svg>
<svg class="abs" style="left:1132px;top:742px" width="17" height="16" viewBox="0 0 17 16">
 <path d="M1 0.5 H15.5 V10.5 H9.5 L7.5 13.8 L5.5 10.5 H1 Z" fill="#fff"/>
 <path d="M4 3 H12.5 M4 5.2 H12.5 M4 7.4 H9.5" stroke="#555" stroke-width="0.9"/>
</svg>
<svg class="abs" style="left:1161px;top:743px" width="23" height="14" viewBox="0 0 23 14">
 <rect x="1.5" y="1" width="20" height="11.5" fill="none" stroke="#ccc" stroke-width="1.1"/>
 <path d="M4 4.5 H19 M4 7 H19 M6 9.6 H17" stroke="#aaa" stroke-width="0.8" stroke-dasharray="1.2 0.8"/>
</svg>
<div class="clock" style="left:1203px;top:736.9px;transform:scaleX(0.937)">7:20 PM</div>
<div class="clock" style="left:1197px;top:751.7px;transform:scaleX(1.037)">4/10/2016</div>
<div id="showdesk"></div>
<div class="abs" style="left:1253px;top:728px;width:5px;height:4px;background:#fff"></div>
</body></html>
